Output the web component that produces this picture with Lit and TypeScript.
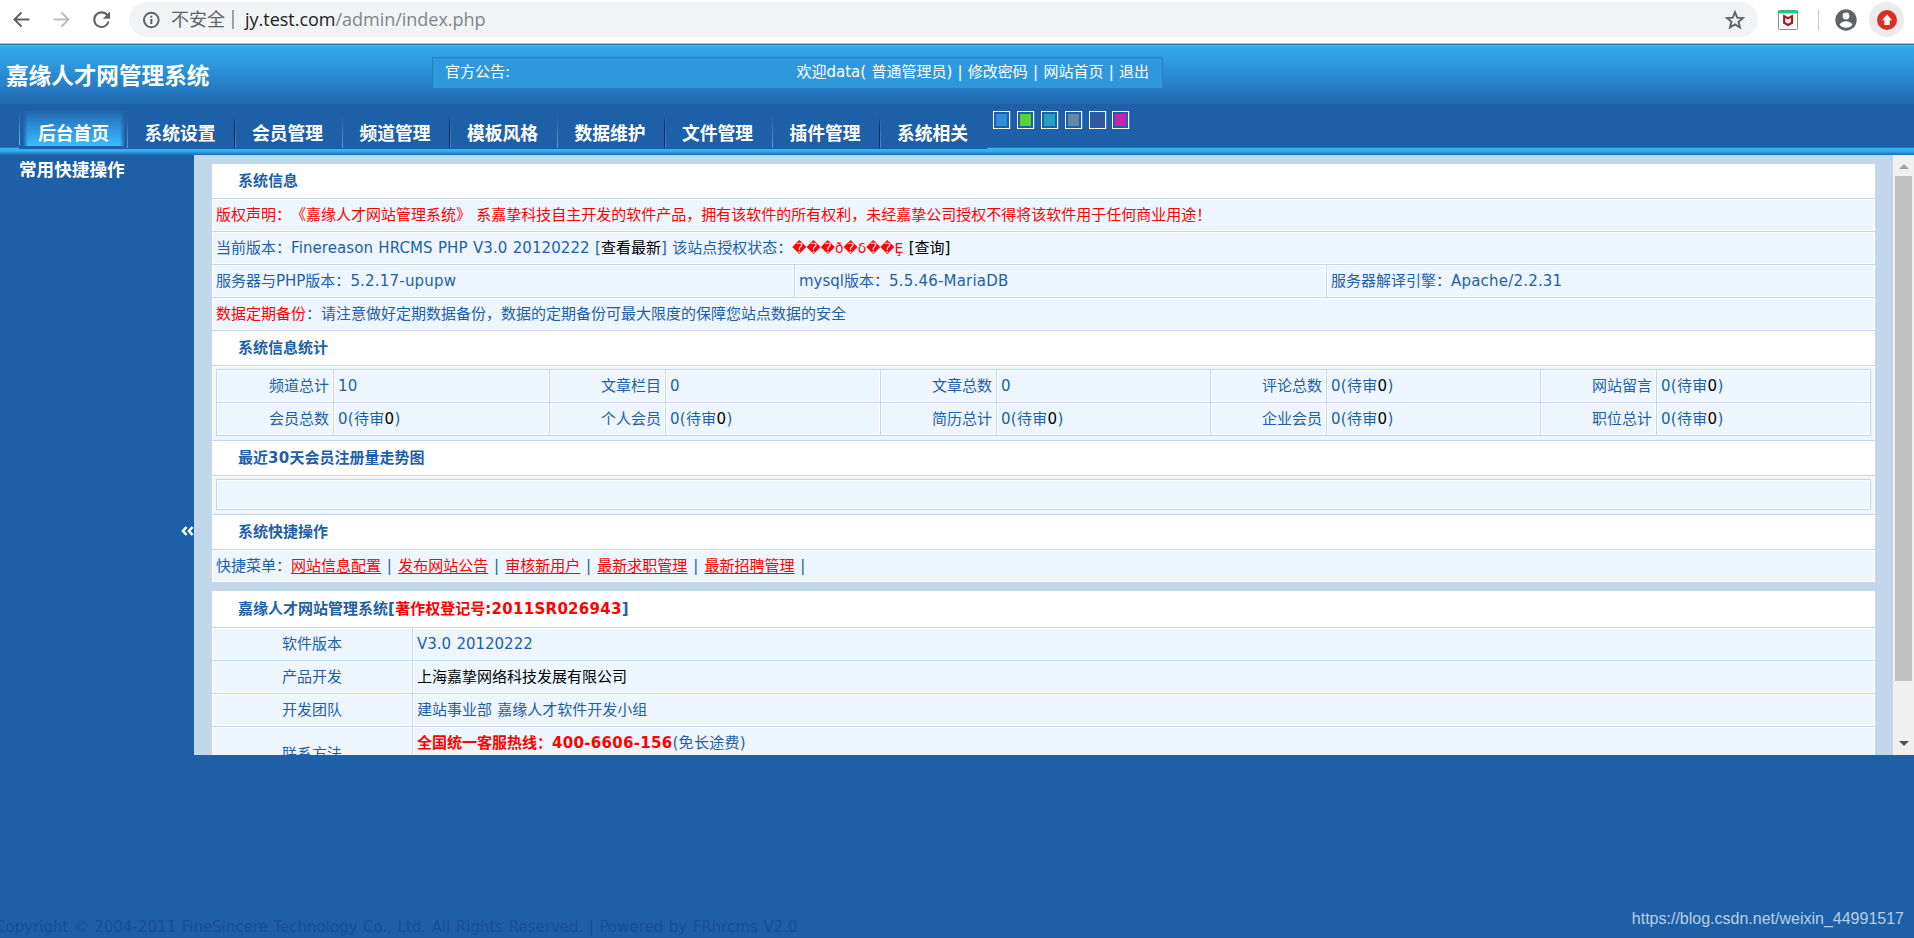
import { LitElement, html, css } from "lit";
import { customElement } from "lit/decorators.js";

const TABS = ["后台首页", "系统设置", "会员管理", "频道管理", "模板风格", "数据维护", "文件管理", "插件管理", "系统相关"];
const SKINS = ["s1", "s2", "s3", "s4", "s5", "s6"];
const STATS: [string, string, boolean][] = [
  ["频道总计", "10", false],
  ["文章栏目", "0", false],
  ["文章总数", "0", false],
  ["评论总数", "0", true],
  ["网站留言", "0", true],
  ["会员总数", "0", true],
  ["个人会员", "0", true],
  ["简历总计", "0", true],
  ["企业会员", "0", true],
  ["职位总计", "0", true],
];
const LINKS = ["网站信息配置", "发布网站公告", "审核新用户", "最新求职管理", "最新招聘管理"];

@customElement("browser-bar")
class BrowserBar extends LitElement {
  static styles = css`
    :host { display: flex; height: 44px; background: #fff; align-items: flex-start; border-bottom: 1px solid #b9bdc3; box-sizing: border-box; font-family: "Open Sans", "Noto Sans CJK SC", sans-serif; font-size: 18px; }
    .nav { width: 129px; display: flex; padding: 9px 0 0 10px; box-sizing: border-box; gap: 18px; }
    svg { display: block; flex: none; }
    .pill { width: 1629px; height: 35px; margin-top: 2px; border-radius: 18px; background: #f1f3f4; display: flex; align-items: center; box-sizing: border-box; padding: 0 12px 0 13px; }
    .warn { margin-left: 11px; width: 61px; color: #5f6368; line-height: 35px; height: 35px; white-space: nowrap; }
    .sep { width: 2px; height: 19px; background: #9b9ea2; }
    .url { margin-left: 11px; flex: 1; color: #80868b; white-space: nowrap; line-height: 35px; height: 35px; letter-spacing: -0.02px; }
    .host { color: #202124; }
    .ext { margin: 9px 0 0 19px; }
    .bar { width: 1px; height: 20px; background: #c8cacd; margin: 10px 0 0 19px; }
    .user { margin: 9px 0 0 16px; }
    .update { margin: 2px 0 0 12px; width: 35px; height: 35px; border-radius: 50%; background: #ebebeb; display: flex; align-items: center; justify-content: center; }
  `;
  render() {
    return html`
      <div class="nav">
        <svg width="22" height="22" viewBox="0 0 22 22" fill="none" stroke="#5f6368" stroke-width="2"><path d="M19.500 10.500H4.500M11.500 3.500L4.500 10.500L11.500 17.500" /></svg>
        <svg width="22" height="22" viewBox="0 0 22 22" fill="none" stroke="#bcbec1" stroke-width="2"><path d="M3.500 10.500H18.500M11.500 3.500L18.500 10.500L11.500 17.500" /></svg>
        <svg width="22" height="22" viewBox="0 0 22 22" fill="none" stroke="#5f6368" stroke-width="2.100"><path d="M17.300 6.200A7.300 7.300 0 1 0 18.600 12.600" /><path d="M20 2.500V9.700H12.800Z" fill="#5f6368" stroke="none" /></svg>
      </div>
      <div class="pill">
        <svg width="18" height="18" viewBox="0 0 18 18" fill="none" stroke="#5f6368" stroke-width="2"><circle cx="9.300" cy="9" r="7.300" /><path d="M9.300 8V13M9.300 4.800V6.700" /></svg>
        <span class="warn">不安全</span><span class="sep"></span>
        <span class="url"><span class="host">jy.test.com</span>/admin/index.php</span>
        <svg width="24" height="20" viewBox="0 0 24 20" fill="none" stroke="#5f6368" stroke-width="1.900"><path d="M13 2.200L15.200 7.600L21 8L16.500 11.800L18 17.500L13 14.400L8 17.500L9.500 11.800L5 8L10.800 7.600Z" /></svg>
      </div>
      <svg class="ext" width="22" height="22" viewBox="0 0 22 22"><rect x="1.500" y="1.500" width="19" height="19" rx="1" fill="#fff" stroke="#8c8c8c" /><path d="M1 1.500h20v3h-20z" fill="#0bd37b" /><path d="M7.200 7.300L11 9.200L15 7.300V13.800L11 15.900L7.200 13.800Z" fill="none" stroke="#b5121b" stroke-width="2.200" /></svg>
      <span class="bar"></span>
      <svg class="user" width="22" height="22" viewBox="0 0 22 22"><circle cx="11" cy="11" r="10.700" fill="#5f6368" /><circle cx="11" cy="7" r="3.400" fill="#fff" /><path d="M4.500 15.500C6 13 9 12.300 11 12.300S16 13 17.500 15.500C16 17.700 13.500 18.700 11 18.700S6 17.700 4.500 15.500Z" fill="#fff" /></svg>
      <div class="update"><svg width="20" height="20" viewBox="0 0 20 20"><circle cx="10" cy="10" r="10" fill="#d93025" /><path d="M10 4.500L15 10.300H12.600V15H7.400V10.300H5Z" fill="#fff" /></svg></div>
    `;
  }
}

@customElement("info-panels")
class InfoPanels extends LitElement {
  static styles = css`
    :host { display: flex; height: 600px; overflow: hidden; color: #1e60a8; font-size: 15px; word-spacing: 0.5px; text-spacing-trim: space-all; }
    .frame { width: 1699px; box-sizing: border-box; padding: 9px 18px 0; background: #c3d7ec; overflow: hidden; }
    .panel { margin-bottom: 9px; background: #fff; }
    .head { height: 35px; box-sizing: border-box; border-bottom: 1px solid #c3d7ec; padding-left: 26px; line-height: 34px; font-weight: bold; font-size: 15px; white-space: nowrap; }
    .head.tall { height: 37px; line-height: 36px; }
    .row { display: grid; height: 33px; box-sizing: border-box; border-bottom: 1px solid #c3d7ec; white-space: nowrap; }
    .row.end { height: 32px; border-bottom: 0; }
    .three { grid-template-columns: 583px 532px 1fr; }
    .two { grid-template-columns: 201px 1fr; }
    .cell { background: #edf6fe; border: 1px solid #fff; padding: 0 3px; height: 32px; box-sizing: border-box; line-height: 31px; min-width: 0; }
    .line { box-shadow: 1px 0 0 #c3d7ec; margin-right: 1px; }
    .mid { text-align: center; }
    .contact { height: 56px; }
    .contact .cell { border-bottom: 0; height: 55px; }
    .contact .mid { line-height: 53px; }
    .wrap { background: #edf6fe; border: 1px solid #fff; box-sizing: border-box; padding: 2px 3px 3px; }
    .wrap.stats { height: 75px; border-bottom-color: #c3d7ec; }
    .wrap.chart { height: 39px; border-bottom-color: #c3d7ec; }
    .stats-grid { display: grid; grid-template-columns: 117px 216px 116px 215px 116px 214px 116px 214px 116px 214px; grid-auto-rows: 33px; border: 1px solid #c3d7ec; border-width: 1px 0 0 1px; }
    .s { box-sizing: border-box; border: 1px solid #c3d7ec; border-width: 0 1px 1px 0; box-shadow: inset 0 0 0 1px #fff; padding: 0 4px; line-height: 32px; white-space: nowrap; letter-spacing: 0.3px; }
    .s.r { text-align: right; letter-spacing: 0; }
    .box { height: 31px; box-sizing: border-box; border: 1px solid #c3d7ec; box-shadow: inset 0 0 0 1px #fff; }
    .red { color: #f00; }
    .blk { color: #000; }
    .bad { font-size: 13.9px; }
    .v { letter-spacing: 0.2px; }
    .w { letter-spacing: 0.08px; }
    .n { letter-spacing: 0.3px; }
    .p { letter-spacing: 0.5px; }
    .u { color: #f00; text-decoration: underline; text-underline-offset: 2px; }
    .bar { width: 21px; background: #f0f0f0; display: flex; flex-direction: column; align-items: center; }
    .up { margin-top: 9px; border: 5px solid transparent; border-top: 0; border-bottom-color: #a0a0a0; }
    .thumb { margin-top: 7px; width: 17px; height: 505px; background: #c1c1c1; }
    .down { margin-top: 60px; border: 5px solid transparent; border-bottom: 0; border-top-color: #505050; }
  `;
  render() {
    return html`
      <div class="frame">
        <div class="panel">
          <div class="head">系统信息</div>
          <div class="row"><div class="cell red">版权声明：《嘉缘人才网站管理系统》 系嘉挚科技自主开发的软件产品，拥有该软件的所有权利，未经嘉挚公司授权不得将该软件用于任何商业用途！</div></div>
          <div class="row"><div class="cell">当前版本：<span class="w">Finereason HRCMS PHP V3.0 20120222 [</span><span class="blk">查看最新</span>] 该站点授权状态：<span class="red bad">���ð�δ��Ȩ</span> <span class="blk">[查询]</span></div></div>
          <div class="row three"><div class="cell line">服务器与PHP版本：<span class="v">5.2.17-upupw</span></div><div class="cell line">mysql版本：<span class="v">5.5.46-MariaDB</span></div><div class="cell">服务器解译引擎：<span class="v">Apache/2.2.31</span></div></div>
          <div class="row"><div class="cell"><span class="red">数据定期备份</span>：请注意做好定期数据备份，数据的定期备份可最大限度的保障您站点数据的安全</div></div>
          <div class="head">系统信息统计</div>
          <div class="wrap stats"><div class="stats-grid">
            ${STATS.map(([k, v, p]) => html`<div class="s r">${k}</div><div class="s">${v}${p ? html`(待审<span class="blk">0</span>)` : ""}</div>`)}
          </div></div>
          <div class="head">最近<span class="n">30</span>天会员注册量走势图</div>
          <div class="wrap chart"><div class="box"></div></div>
          <div class="head">系统快捷操作</div>
          <div class="row end"><div class="cell">快捷菜单：${LINKS.map((l) => html`<span class="u">${l}</span><span class="p"> | </span>`)}</div></div>
        </div>
        <div class="panel">
          <div class="head tall">嘉缘人才网站管理系统<span class="n">[</span><span class="red">著作权登记号<span class="n">:2011SR026943</span></span>]</div>
          <div class="row two"><div class="cell line mid">软件版本</div><div class="cell">V3.0 20120222</div></div>
          <div class="row two"><div class="cell line mid">产品开发</div><div class="cell blk">上海嘉挚网络科技发展有限公司</div></div>
          <div class="row two"><div class="cell line mid">开发团队</div><div class="cell">建站事业部 嘉缘人才软件开发小组</div></div>
          <div class="row two contact"><div class="cell line mid">联系方法</div><div class="cell"><b class="red">全国统一客服热线：<span class="n">400-6606-156</span></b><span class="n">(免长途费)</span></div></div>
        </div>
      </div>
      <div class="bar"><span class="up"></span><span class="thumb"></span><span class="down"></span></div>
    `;
  }
}

@customElement("app-root")
class AppRoot extends LitElement {
  static styles = css`
    :host { display: flex; flex-direction: column; width: 1914px; height: 938px; box-sizing: border-box; border-bottom: 1px solid #1a5697; overflow: hidden; background: #1e60a8; font-family: "DejaVu Sans", "Noto Sans CJK SC", sans-serif; color: #fff; }
    .top { height: 60px; border-top: 1px solid #2579bd; box-sizing: border-box; background: linear-gradient(#34b8ea 0 2px, #31a4e8 3px, #2f9bdf 17px, #2579c2 45px, #206bb2 59px); display: flex; align-items: flex-start; }
    .logo { width: 426px; padding-left: 6px; font-size: 22.6px; font-weight: bold; line-height: 30px; margin-top: 16px; white-space: nowrap; }
    .notice { width: 731px; height: 31px; margin-top: 12px; box-sizing: border-box; background: #2f98dc; border: 1px solid #2380c6; border-bottom: 0; display: flex; justify-content: space-between; padding: 0 13px 0 12px; font-size: 15px; line-height: 29px; white-space: nowrap; word-spacing: 0.5px; }
    .menu { height: 51px; display: flex; align-items: flex-start; padding-left: 19px; background: linear-gradient(#2576bd 0 1px, #35b1f3 1px 4px, #2f9fe2 5px, #2a8bd0 6px, #2169b1 8px) 0 43px / 100% 8px no-repeat; }
    .tab { width: 107.5px; height: 45px; box-sizing: border-box; padding-top: 15px; padding-left: 18px; font-size: 17.8px; font-weight: bold; line-height: 30px; white-space: nowrap; background: linear-gradient(#1e60a8, #6b9bd0) 0 12px / 1px 32px no-repeat, #1e60a8; }
    .tab.dark { background: linear-gradient(#1e60a8, #0d2c68 30%, #0d2c68) 0 12px / 1px 32px no-repeat, linear-gradient(#1e60a8, #4f86c2) 1px 12px / 1px 32px no-repeat, #1e60a8; }
    .tab.on { padding-left: 19px; background: linear-gradient(90deg, #1e60a8, transparent 5px, transparent 97px, #1e60a8) 4px 7px / 102px 35px no-repeat, linear-gradient(#2068b0, #2f93da 50%, #37bdff) 4px 7px / 102px 35px no-repeat, linear-gradient(#1e60a8, #8fb4dc) 0 8px / 1px 33px no-repeat, #1e60a8; }
    .skins { display: flex; gap: 6.9px; margin: 7px 0 0 6.5px; }
    .skin { width: 17px; height: 18px; box-sizing: border-box; border: 1px solid #fff; padding: 2px; background-clip: content-box; box-shadow: 1px 0 0 #4a80bd; }
    .s1 { background-color: #2d90d8; } .s2 { background-color: #58d42b; } .s3 { background-color: #22a0bd; }
    .s4 { background-color: #6288a4; } .s5 { background-color: #36569b; } .s6 { background-color: #c822ac; }
    .main { display: flex; height: 600px; }
    .side { width: 194px; display: flex; flex-direction: column; justify-content: space-between; }
    .side-title { padding-left: 19px; font-size: 17.6px; font-weight: bold; line-height: 30px; white-space: nowrap; }
    .fold { align-self: flex-end; margin: 0 0 219px 0; }
    .foot { flex: 1; display: flex; justify-content: space-between; align-items: flex-end; white-space: nowrap; }
    .copy { font-size: 15px; line-height: 20px; color: #184f90; margin-left: -5px; word-spacing: 0.8px; }
    .mark { font: 16px/24px "Liberation Sans", sans-serif; color: #b9cde4; padding: 0 10px 6px 0; }
  `;
  render() {
    return html`
      <browser-bar></browser-bar>
      <div class="top">
        <div class="logo">嘉缘人才网管理系统</div>
        <div class="notice"><span>官方公告:</span><span>欢迎data( 普通管理员) | 修改密码 | 网站首页 | 退出</span></div>
      </div>
      <div class="menu">
        ${TABS.map((t, i) => html`<div class="tab ${i === 0 ? "on" : i % 2 === 0 ? "dark" : ""}">${t}</div>`)}
        <div class="skins">${SKINS.map((s) => html`<span class="skin ${s}"></span>`)}</div>
      </div>
      <div class="main">
        <div class="side">
          <div class="side-title">常用快捷操作</div>
          <svg class="fold" width="13" height="10" viewBox="0 0 13 10" fill="none" stroke="#fff" stroke-width="2.600"><path d="M5.500 1L2 5L5.500 9M11.500 1L8 5L11.500 9" /></svg>
        </div>
        <info-panels></info-panels>
      </div>
      <div class="foot">
        <div class="copy">Copyright © 2004-2011 FineSincere Technology Co., Ltd. All Rights Reserved. | Powered by FRhrcms V2.0</div>
        <div class="mark">https://blog.csdn.net/weixin_44991517</div>
      </div>
    `;
  }
}
